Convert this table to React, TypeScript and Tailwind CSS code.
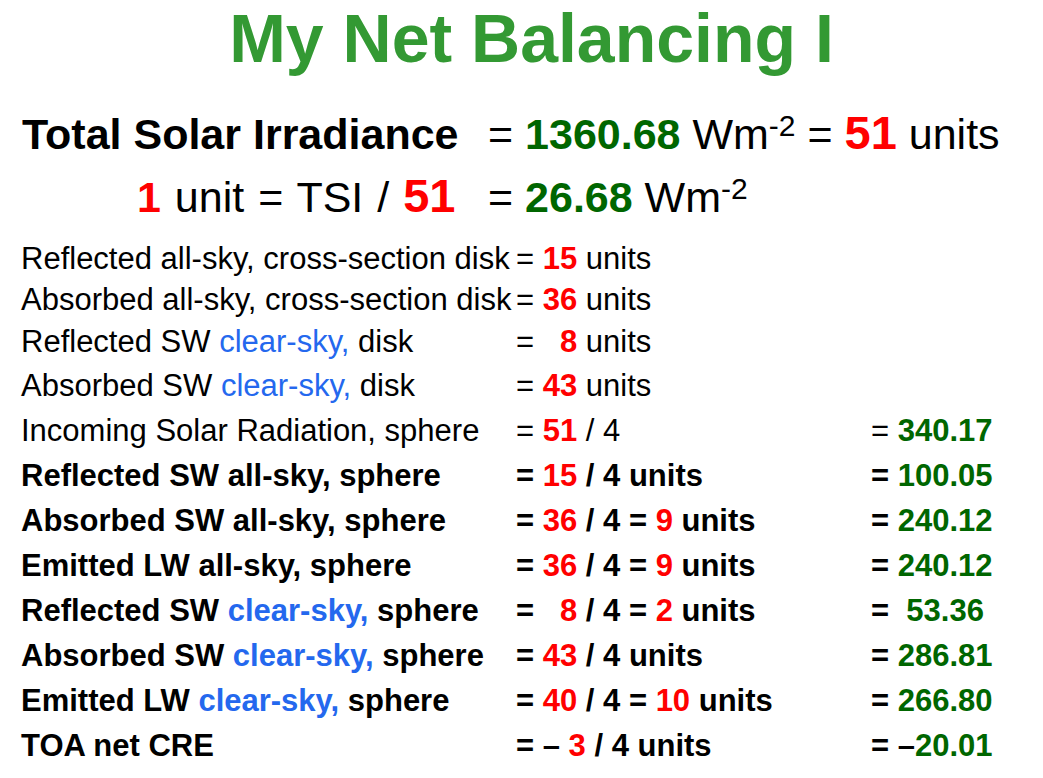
import React from "react";

const Red = ({ children, big }: { children: React.ReactNode; big?: boolean }) => (
  <span className={`font-bold text-[#ff0000] ${big ? "text-[47px] leading-none" : ""}`}>{children}</span>
);

const Green = ({ children }: { children: React.ReactNode }) => (
  <span className="font-bold text-[#006600]">{children}</span>
);

const Blue = ({ children }: { children: React.ReactNode }) => (
  <span className="text-[#2468ee]">{children}</span>
);

const Sup = ({ children }: { children: React.ReactNode }) => (
  <span className="align-[13px] text-[30px] leading-none">{children}</span>
);

type RowProps = {
  h: string;
  bold?: boolean;
  label: React.ReactNode;
  mid: React.ReactNode;
  right?: React.ReactNode;
};

function Row({ h, bold, label, mid, right }: RowProps) {
  return (
    <div className={`flex items-baseline whitespace-pre ${h} ${bold ? "font-bold" : ""}`}>
      <div className="w-[495px] shrink-0">{label}</div>
      <div className="w-[355px] shrink-0">{mid}</div>
      <div>{right}</div>
    </div>
  );
}

export default function App() {
  return (
    <div className="h-[778px] w-[1043px] overflow-hidden bg-white font-['Liberation_Sans',Arial,sans-serif] text-black">
      <h1 className="h-[76px] pl-5 text-center text-[68px] font-bold leading-[76px] text-[#339933]">
        My Net Balancing I
      </h1>

      <div className="mt-[28px] flex h-[60px] items-baseline whitespace-pre pl-[22px] text-[43px] leading-[60px]">
        <span className="w-[466px] shrink-0 font-bold">Total Solar Irradiance</span>
        <span>
          = <Green>1360.68</Green> Wm<Sup>-2</Sup> = <Red big>51</Red> units
        </span>
      </div>

      <div className="mt-[3px] flex h-[60px] items-baseline whitespace-pre pl-[22px] text-[43px] leading-[60px]">
        <span className="w-[466px] shrink-0 pl-[115px] [word-spacing:2px]">
          <Red>1</Red> unit = TSI / <Red big>51</Red>
        </span>
        <span>
          = <Green>26.68</Green> Wm<Sup>-2</Sup>
        </span>
      </div>

      <div className="mt-[11px] pl-[21px] text-[31px]">
        <Row
          h="h-[41px] leading-[41px]"
          label="Reflected all-sky, cross-section disk"
          mid={<>= <Red>15</Red> units</>}
        />
        <Row
          h="h-[42px] leading-[42px]"
          label="Absorbed all-sky, cross-section disk"
          mid={<>= <Red>36</Red> units</>}
        />
        <Row
          h="h-[42px] leading-[42px]"
          label={<>Reflected SW <Blue>clear-sky,</Blue> disk</>}
          mid={<>=   <Red>8</Red> units</>}
        />
        <Row
          h="h-[45px] leading-[45px]"
          label={<>Absorbed SW <Blue>clear-sky,</Blue> disk</>}
          mid={<>= <Red>43</Red> units</>}
        />
        <Row
          h="h-[45px] leading-[45px]"
          label="Incoming Solar Radiation, sphere"
          mid={<>= <Red>51</Red> / 4</>}
          right={<>= <Green>340.17</Green></>}
        />
        <Row
          h="h-[45px] leading-[45px]"
          bold
          label="Reflected SW all-sky, sphere"
          mid={<>= <Red>15</Red> / 4 units</>}
          right={<>= <Green>100.05</Green></>}
        />
        <Row
          h="h-[45px] leading-[45px]"
          bold
          label="Absorbed SW all-sky, sphere"
          mid={<>= <Red>36</Red> / 4 = <Red>9</Red> units</>}
          right={<>= <Green>240.12</Green></>}
        />
        <Row
          h="h-[45px] leading-[45px]"
          bold
          label="Emitted LW all-sky, sphere"
          mid={<>= <Red>36</Red> / 4 = <Red>9</Red> units</>}
          right={<>= <Green>240.12</Green></>}
        />
        <Row
          h="h-[45px] leading-[45px]"
          bold
          label={<>Reflected SW <Blue>clear-sky,</Blue> sphere</>}
          mid={<>=   <Red>8</Red> / 4 = <Red>2</Red> units</>}
          right={<>=  <Green>53.36</Green></>}
        />
        <Row
          h="h-[45px] leading-[45px]"
          bold
          label={<>Absorbed SW <Blue>clear-sky,</Blue> sphere</>}
          mid={<>= <Red>43</Red> / 4 units</>}
          right={<>= <Green>286.81</Green></>}
        />
        <Row
          h="h-[45px] leading-[45px]"
          bold
          label={<>Emitted LW <Blue>clear-sky,</Blue> sphere</>}
          mid={<>= <Red>40</Red> / 4 = <Red>10</Red> units</>}
          right={<>= <Green>266.80</Green></>}
        />
        <Row
          h="h-[45px] leading-[45px]"
          bold
          label="TOA net CRE"
          mid={<>= – <Red>3</Red> / 4 units</>}
          right={<>= –<Green>20.01</Green></>}
        />
      </div>
    </div>
  );
}
